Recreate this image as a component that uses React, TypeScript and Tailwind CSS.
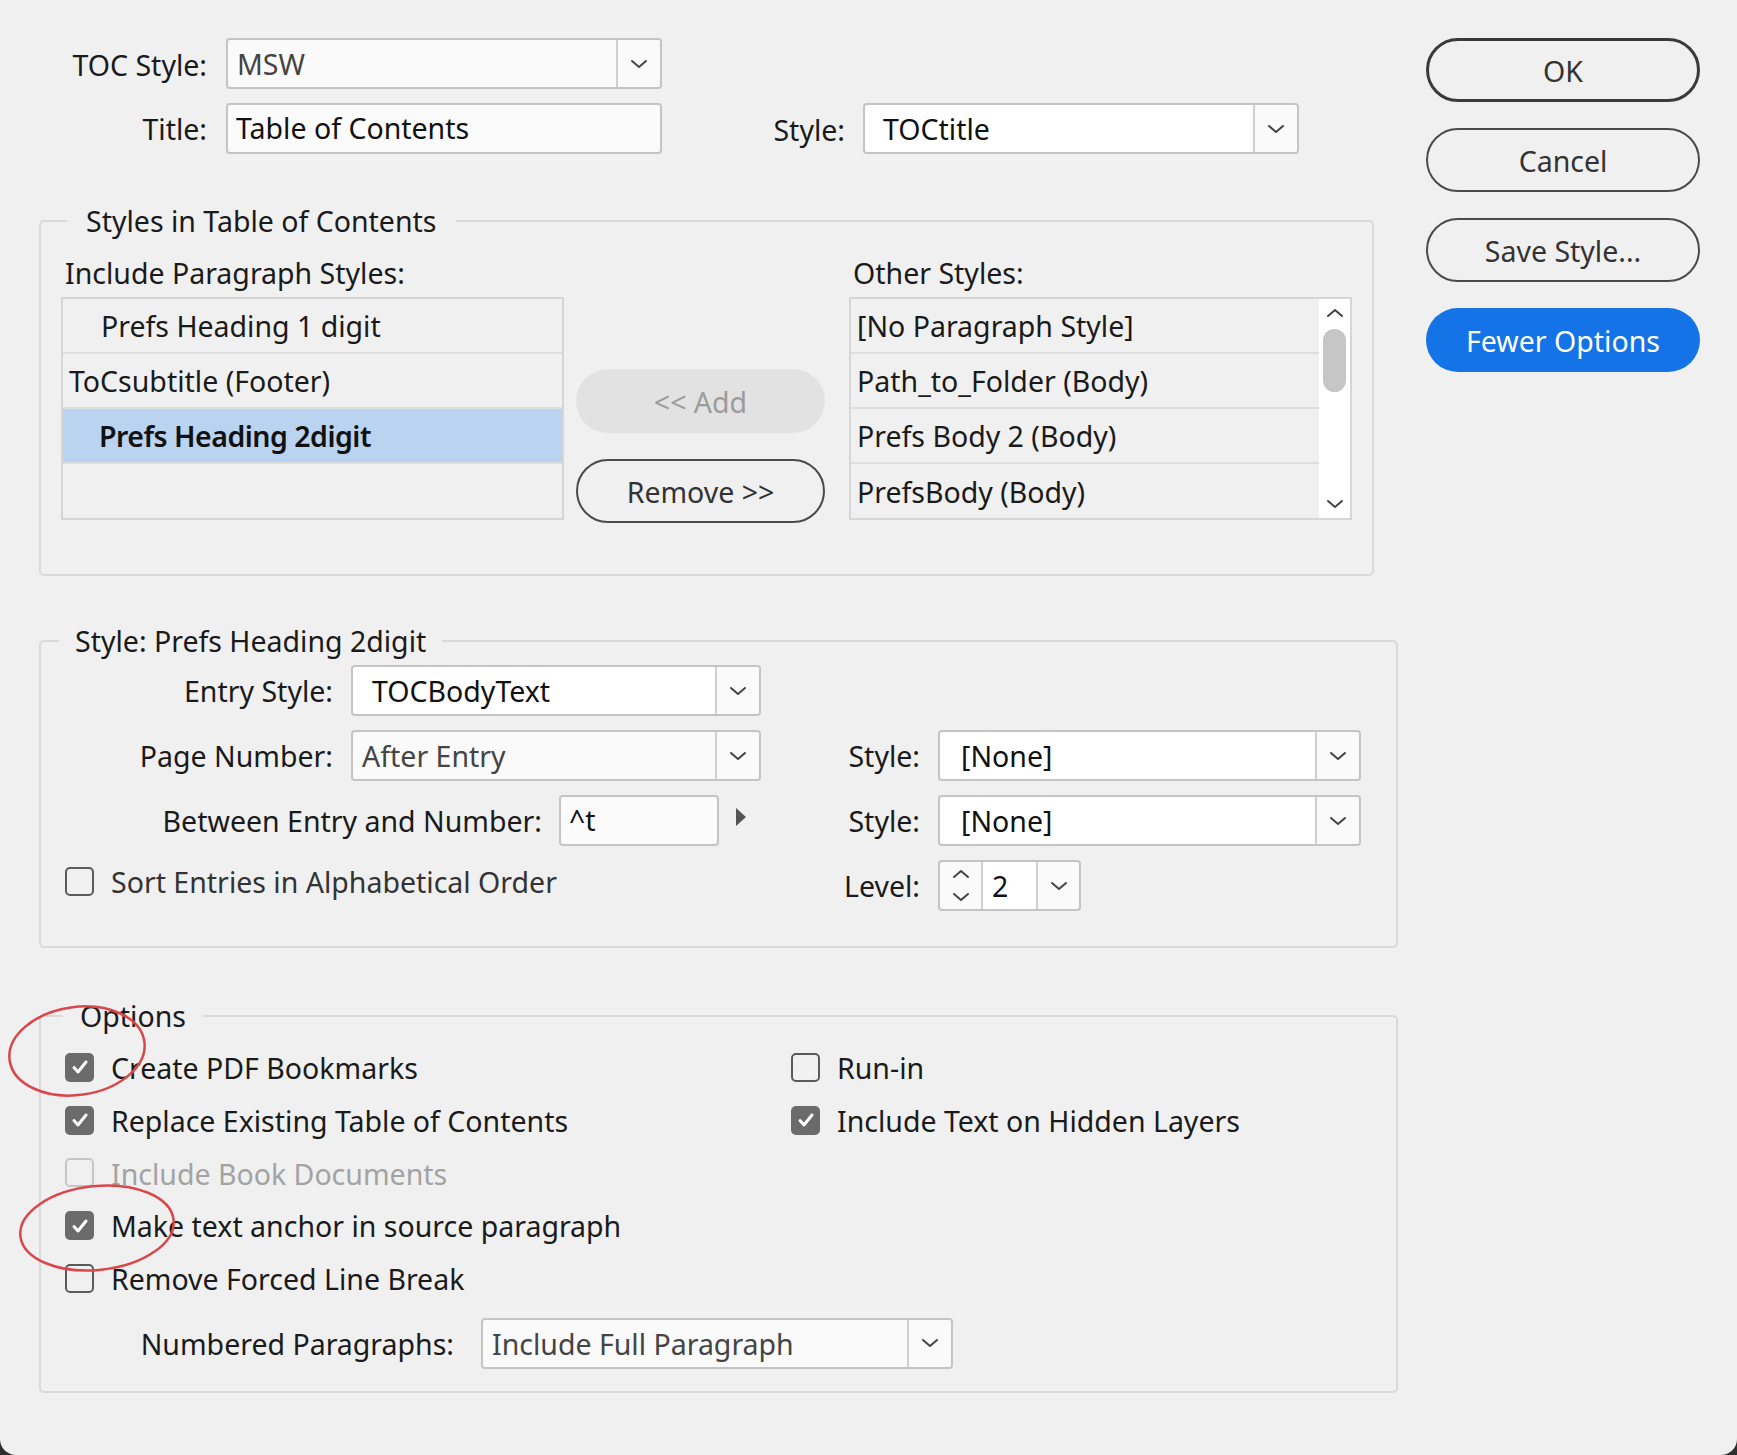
import { ReactNode } from 'react';

const font = { fontFamily: '"Noto Sans", "Open Sans", sans-serif' };

function Chevron({ up = false }: { up?: boolean }) {
  return (
    <svg width="18" height="10" viewBox="0 0 18 10" className={up ? 'rotate-180' : ''}>
      <path d="M2 2l7 6 7-6" fill="none" stroke="#444" strokeWidth="2" strokeLinecap="round" strokeLinejoin="round" />
    </svg>
  );
}

function Dropdown({ value, width, muted = false, indent = 'pl-[18px]' }: { value: string; width: string; muted?: boolean; indent?: string }) {
  return (
    <div className={`${width} h-[51px] flex border-2 border-[#c4c4c4] rounded-[4px] ${muted ? 'bg-[#fafafa]' : 'bg-white'}`}>
      <div className={`flex-1 flex items-center pt-[2px] ${indent} ${muted ? 'text-[#444]' : 'text-[#111]'}`}>{value}</div>
      <div className="w-[44px] border-l-2 border-[#d0d0d0] bg-[#fafafa] rounded-r-[3px] flex items-center justify-center">
        <Chevron />
      </div>
    </div>
  );
}

function Checkbox({ checked = false, disabled = false }: { checked?: boolean; disabled?: boolean }) {
  if (checked) {
    return (
      <div className="w-[29px] h-[29px] rounded-[5px] bg-[#6b6b6b] flex items-center justify-center shrink-0">
        <svg width="20" height="18" viewBox="0 0 20 18">
          <path d="M4 9.5l4 4.5 8-10" fill="none" stroke="#fff" strokeWidth="3" strokeLinecap="round" strokeLinejoin="round" />
        </svg>
      </div>
    );
  }
  return (
    <div className={`w-[29px] h-[29px] rounded-[5px] border-2 shrink-0 ${disabled ? 'border-[#c6c6c6]' : 'border-[#5a5a5a]'}`} />
  );
}

function CheckRow({ label, checked, disabled }: { label: string; checked?: boolean; disabled?: boolean }) {
  return (
    <div className="flex items-center h-[52.75px]">
      <Checkbox checked={checked} disabled={disabled} />
      <span className={`ml-[17px] pt-[2px] ${disabled ? 'text-[#a3a3a3]' : 'text-[#1a1a1a]'}`}>{label}</span>
    </div>
  );
}

function PillButton({ children, kind = 'normal' }: { children: ReactNode; kind?: 'default' | 'normal' | 'primary' | 'disabled' }) {
  const styles = {
    default: 'border-[3px] border-[#3a3a3a] text-[#333]',
    normal: 'border-2 border-[#4a4a4a] text-[#333]',
    primary: 'bg-[#1473e6] text-white',
    disabled: 'bg-[#e2e2e2] text-[#9c9c9c]',
  }[kind];
  return (
    <div className={`h-[64px] rounded-full flex items-center justify-center pt-[2px] ${styles}`}>{children}</div>
  );
}

function Group({ title, width, children, legendGap = 'ml-[26px] px-[19px]' }: { title: string; width: string; children: ReactNode; legendGap?: string }) {
  return (
    <fieldset className={`${width} border-2 border-[#d9d9d9] rounded-[5px]`}>
      <legend className={`${legendGap} leading-[40px] text-[#1a1a1a]`}>{title}</legend>
      {children}
    </fieldset>
  );
}

export default function App() {
  const included = [
    { name: 'Prefs Heading 1 digit', indent: 'pl-[38px]' },
    { name: 'ToCsubtitle (Footer)', indent: 'pl-[6px]' },
    { name: 'Prefs Heading 2digit', indent: 'pl-[36px]', selected: true },
  ];
  const others = ['[No Paragraph Style]', 'Path_to_Folder (Body)', 'Prefs Body 2 (Body)', 'PrefsBody (Body)'];

  return (
    <div className="w-[1737px] h-[1455px] bg-[#2e2e2e] text-[28.5px]" style={font}>
      <div className="relative w-full h-full bg-[#f0f0f0] rounded-b-[16px] flex pt-[38px] pl-[39px] text-[#1a1a1a]">
        {/* main column */}
        <div className="w-[1359px] flex flex-col">
          <div className="flex items-center h-[51px]">
            <div className="w-[168px] text-right pt-[3px]">TOC Style:</div>
            <div className="ml-[19px]">
              <Dropdown value="MSW" width="w-[436px]" muted indent="pl-[9px]" />
            </div>
          </div>
          <div className="flex items-center h-[51px] mt-[14px]">
            <div className="w-[168px] text-right pt-[2px]">Title:</div>
            <div className="ml-[19px] w-[436px] h-[51px] border-2 border-[#c4c4c4] rounded-[4px] bg-[#fbfbfb] flex items-center pl-[8px] text-[#111]">
              Table of Contents
            </div>
            <div className="w-[183px] text-right pt-[4px]">Style:</div>
            <div className="ml-[18px]">
              <Dropdown value="TOCtitle" width="w-[436px]" />
            </div>
          </div>

          <div className="mt-[47px]">
            <Group title="Styles in Table of Contents" width="w-[1335px]">
              <div className="flex px-[20px] pt-[12px] pb-[51px]">
                <div className="w-[503px]">
                  <div className="leading-[40px] pl-[4px]">Include Paragraph Styles:</div>
                  <div className="mt-[4px] h-[223px] border-2 border-[#d6d6d6] bg-[#f0f0f0]">
                    {included.map(r => (
                      <div
                        key={r.name}
                        className={`h-[55px] border-b-2 border-[#dedede] flex items-center pt-[2px] ${r.indent} ${r.selected ? 'bg-[#b9d3f0] font-semibold tracking-[-0.5px] text-[#111]' : ''}`}
                      >
                        {r.name}
                      </div>
                    ))}
                  </div>
                </div>
                <div className="w-[249px] ml-[12px] pt-[116px] flex flex-col gap-[26px]">
                  <PillButton kind="disabled">&lt;&lt; Add</PillButton>
                  <PillButton>Remove &gt;&gt;</PillButton>
                </div>
                <div className="w-[503px] ml-[24px]">
                  <div className="leading-[40px] pl-[4px]">Other Styles:</div>
                  <div className="mt-[4px] h-[223px] border-2 border-[#d6d6d6] bg-[#f0f0f0] flex">
                    <div className="flex-1">
                      {others.map((o, i) => (
                        <div key={o} className={`h-[55px] flex items-center pt-[2px] pl-[6px] ${i < 3 ? 'border-b-2 border-[#dedede]' : ''}`}>
                          {o}
                        </div>
                      ))}
                    </div>
                    <div className="w-[31px] bg-white flex flex-col items-center">
                      <div className="h-[28px] flex items-center justify-center">
                        <Chevron up />
                      </div>
                      <div className="w-[23px] h-[63px] rounded-full bg-[#c6c6c6] mt-[2px]" />
                      <div className="flex-1" />
                      <div className="h-[28px] flex items-center justify-center">
                        <Chevron />
                      </div>
                    </div>
                  </div>
                </div>
              </div>
            </Group>
          </div>

          <div className="mt-[45px]">
            <Group title="Style: Prefs Heading 2digit" width="w-[1359px]" legendGap="ml-[18px] px-[16px]">
              <div className="flex flex-col gap-[14px] pt-[4px] pb-[35px]">
                <div className="flex items-center h-[51px]">
                  <div className="w-[292px] text-right pt-[2px]">Entry Style:</div>
                  <div className="ml-[18px]">
                    <Dropdown value="TOCBodyText" width="w-[410px]" indent="pl-[19px]" />
                  </div>
                </div>
                <div className="flex items-center h-[51px]">
                  <div className="w-[800px] flex items-center">
                    <div className="w-[292px] text-right pt-[2px]">Page Number:</div>
                    <div className="ml-[18px]">
                      <Dropdown value="After Entry" width="w-[410px]" muted indent="pl-[9px]" />
                    </div>
                  </div>
                  <div className="w-[79px] text-right pt-[2px]">Style:</div>
                  <div className="ml-[18px]">
                    <Dropdown value="[None]" width="w-[423px]" indent="pl-[21px]" />
                  </div>
                </div>
                <div className="flex items-center h-[51px]">
                  <div className="w-[800px] flex items-center">
                    <div className="w-[501px] text-right pt-[2px]">Between Entry and Number:</div>
                    <div className="ml-[17px] w-[160px] h-[51px] border-2 border-[#c4c4c4] rounded-[4px] bg-[#fbfbfb] flex items-center pl-[8px] text-[#111]">
                      ^t
                    </div>
                    <svg width="12" height="20" viewBox="0 0 12 20" className="ml-[16px] mb-[8px]">
                      <path d="M1 1l10 9-10 9z" fill="#555" />
                    </svg>
                  </div>
                  <div className="w-[79px] text-right pt-[2px]">Style:</div>
                  <div className="ml-[18px]">
                    <Dropdown value="[None]" width="w-[423px]" indent="pl-[21px]" />
                  </div>
                </div>
                <div className="flex items-center h-[51px]">
                  <div className="w-[800px] flex items-center pl-[24px] mb-[8px]">
                    <Checkbox />
                    <span className="ml-[17px] pt-[2px] text-[#333]">Sort Entries in Alphabetical Order</span>
                  </div>
                  <div className="w-[79px] text-right pt-[2px]">Level:</div>
                  <div className="ml-[18px] w-[143px] h-[51px] border-2 border-[#c4c4c4] rounded-[4px] bg-[#fafafa] flex">
                    <div className="w-[43px] border-r-2 border-[#d0d0d0] flex flex-col items-center justify-center gap-[13px]">
                      <Chevron up />
                      <Chevron />
                    </div>
                    <div className="w-[53px] bg-white flex items-center pl-[9px] pt-[2px] text-[#111]">2</div>
                    <div className="flex-1 border-l-2 border-[#d0d0d0] flex items-center justify-center">
                      <Chevron />
                    </div>
                  </div>
                </div>
              </div>
            </Group>
          </div>

          <div className="mt-[48px]">
            <Group title="Options" width="w-[1359px]" legendGap="ml-[22px] px-[17px]">
              <div className="pl-[24px] pt-[5px] pb-[22px]">
                <div className="flex">
                  <div className="w-[726px]">
                    <CheckRow label="Create PDF Bookmarks" checked />
                    <CheckRow label="Replace Existing Table of Contents" checked />
                  </div>
                  <div>
                    <CheckRow label="Run-in" />
                    <CheckRow label="Include Text on Hidden Layers" checked />
                  </div>
                </div>
                <CheckRow label="Include Book Documents" disabled />
                <CheckRow label="Make text anchor in source paragraph" checked />
                <CheckRow label="Remove Forced Line Break" />
                <div className="flex items-center h-[51px] mt-[13px]">
                  <div className="w-[389px] text-right pt-[2px]">Numbered Paragraphs:</div>
                  <div className="ml-[27px]">
                    <Dropdown value="Include Full Paragraph" width="w-[472px]" muted indent="pl-[9px]" />
                  </div>
                </div>
              </div>
            </Group>
          </div>
        </div>

        {/* button column */}
        <div className="w-[274px] ml-[28px] flex flex-col gap-[26px]">
          <PillButton kind="default">OK</PillButton>
          <PillButton>Cancel</PillButton>
          <PillButton>Save Style...</PillButton>
          <PillButton kind="primary">Fewer Options</PillButton>
        </div>

        {/* annotation circles */}
        <svg className="absolute left-0 top-0 pointer-events-none" width="1737" height="1455">
          <ellipse cx="77" cy="1051" rx="68" ry="44" transform="rotate(-8 77 1051)" fill="none" stroke="#d9474c" strokeWidth="2.5" />
          <ellipse cx="97" cy="1228" rx="77" ry="42" transform="rotate(-6 97 1228)" fill="none" stroke="#d9474c" strokeWidth="2.5" />
        </svg>
      </div>
    </div>
  );
}
